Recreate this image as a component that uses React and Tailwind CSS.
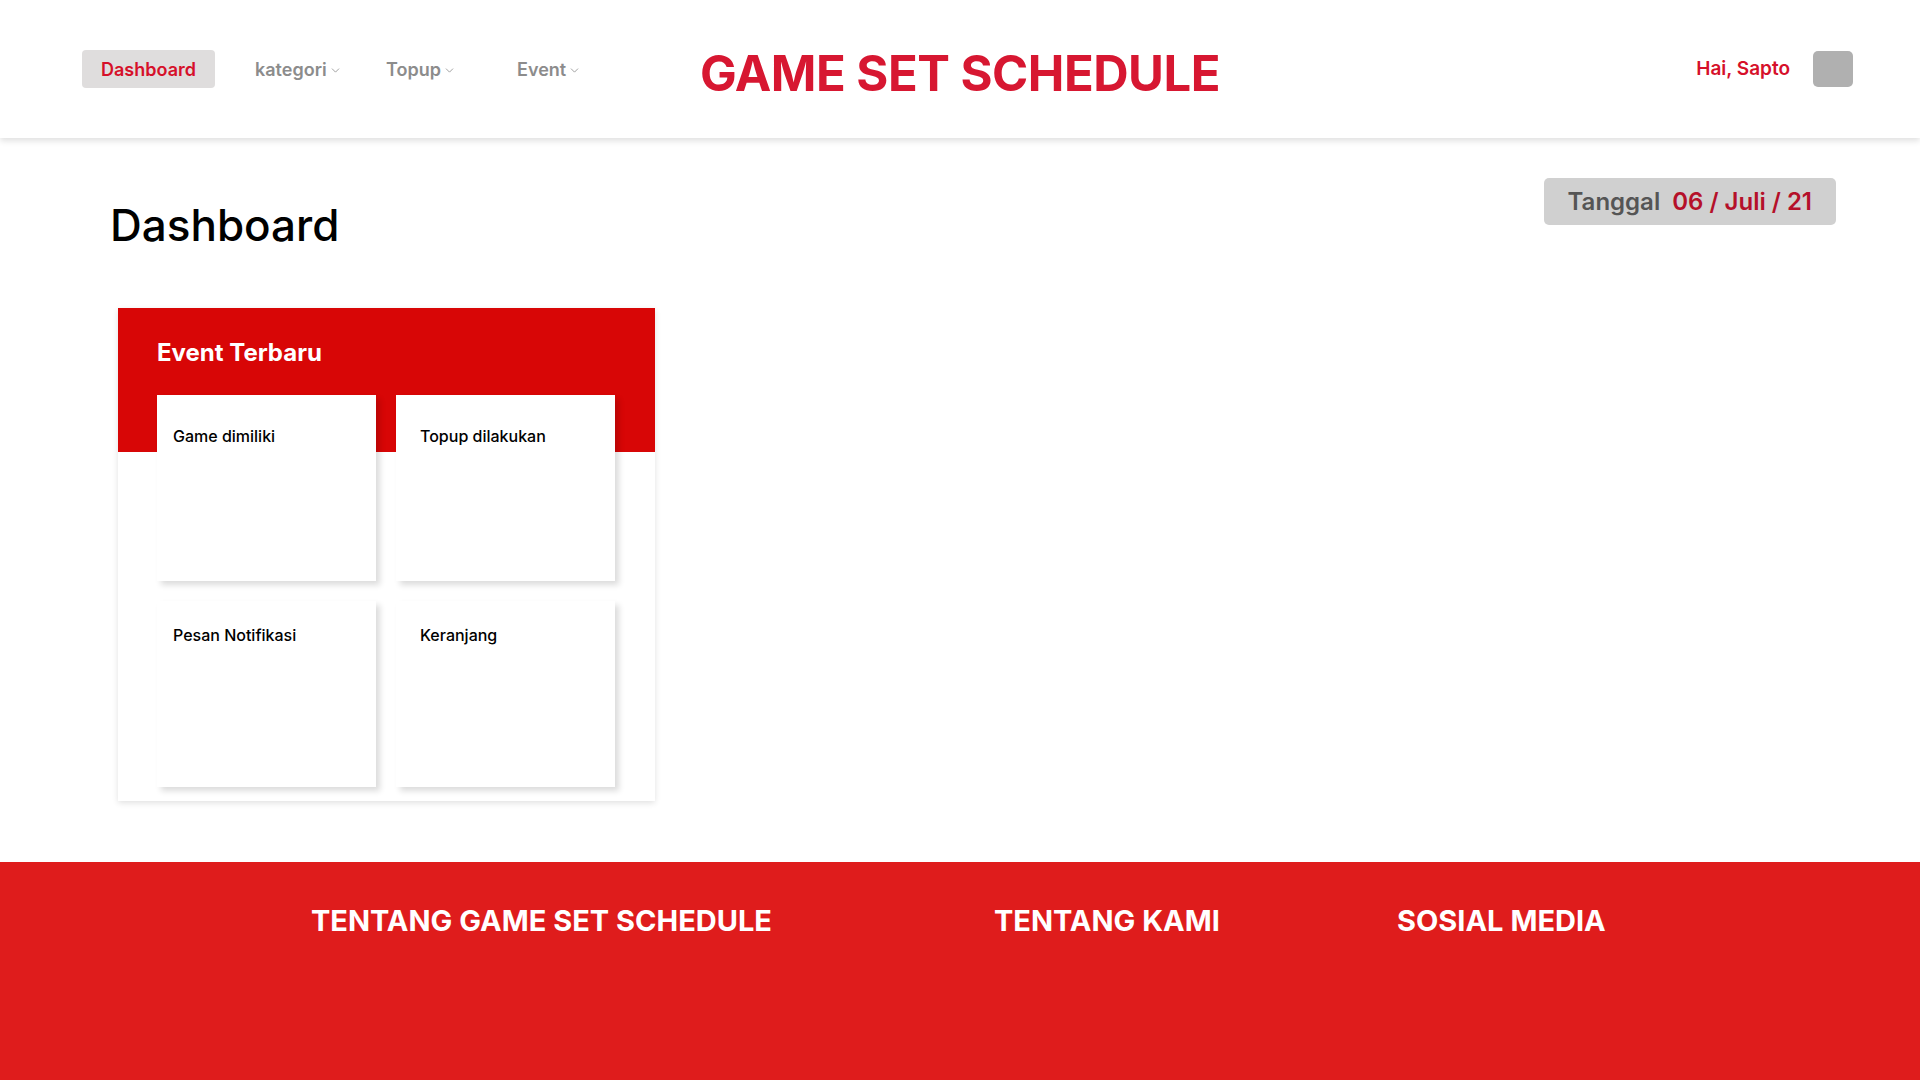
import { ChevronDown } from 'lucide-react'

const NAV = ['kategori', 'Topup', 'Event']

const STATS = [
  { label: 'Game dimiliki', pad: 'pt-[31px] pl-[16px]' },
  { label: 'Topup dilakukan', pad: 'pt-[31px] pl-[24px]' },
  { label: 'Pesan Notifikasi', pad: 'pt-[24px] pl-[16px]' },
  { label: 'Keranjang', pad: 'pt-[24px] pl-[24px]' },
]

function Header() {
  return (
    <header className="relative z-10 h-[138px] bg-white shadow-[0_3px_6px_rgba(0,0,0,0.12)] grid grid-cols-[1fr_auto_1fr] items-center px-[82px]">
      <nav className="flex items-center">
        <button className="h-[38px] w-[133px] rounded-[4px] bg-[#dfdddd] text-[#d6102a] text-[18px] font-semibold mr-[40px]">
          Dashboard
        </button>
        {NAV.map(item => (
          <span key={item} className="w-[131px] flex items-center gap-[2px] text-[18px] font-semibold text-[#8c8c8c]">
            {item}
            <ChevronDown size={13} strokeWidth={1.5} className="mt-[3px]" />
          </span>
        ))}
      </nav>
      <h1 className="mt-[9px] whitespace-nowrap text-center text-[49px] font-bold text-[#d71731] tracking-[-0.5px] leading-none">
        GAME SET SCHEDULE
      </h1>
      <div className="flex items-center justify-end gap-[23px] mr-[-15px]">
        <span className="text-[19px] font-semibold text-[#d6102a]">Hai, Sapto</span>
        <div className="w-[40px] h-[36px] rounded-[5px] bg-[#b0b0b0]" />
      </div>
    </header>
  )
}

function StatCard({ label, pad }) {
  return (
    <div className={`h-[186px] bg-white shadow-[4px_4px_6px_rgba(0,0,0,0.14)] ${pad}`}>
      <p className="text-[16px] font-medium text-black leading-[20px]">{label}</p>
    </div>
  )
}

function EventCard() {
  return (
    <section className="relative w-[537px] h-[493px] bg-white shadow-[0_2px_6px_rgba(0,0,0,0.12)]">
      <div className="absolute inset-x-0 top-0 h-[144px] bg-[#d80606]" />
      <div className="relative px-[39px]">
        <h3 className="pt-[27px] h-[87px] text-[24px] font-bold text-white">Event Terbaru</h3>
        <div className="grid grid-cols-2 gap-[20px] w-[458px]">
          {STATS.map(s => <StatCard key={s.label} {...s} />)}
        </div>
      </div>
    </section>
  )
}

export default function App() {
  return (
    <div className="min-h-screen flex flex-col bg-white" style={{ fontFamily: 'Inter, "Noto Sans", sans-serif' }}>
      <Header />
      <main className="h-[724px] px-[110px] pt-[40px]">
        <div className="flex justify-between items-start">
          <h2 className="mt-[25px] text-[44px] font-medium text-black leading-none">Dashboard</h2>
          <div className="h-[47px] px-[24px] rounded-[5px] bg-[#d0d0d0] flex items-center gap-[12px] text-[24px] font-semibold mr-[-26px]">
            <span className="text-[#555555]">Tanggal</span>
            <span className="text-[#b5102a]">06 / Juli / 21</span>
          </div>
        </div>
        <div className="mt-[61px] ml-[8px]">
          <EventCard />
        </div>
      </main>
      <footer className="h-[218px] bg-[#df1c1c] flex pt-[37px] pl-[311px]">
        <h4 className="w-[683px] text-[29px] font-bold text-white">TENTANG GAME SET SCHEDULE</h4>
        <h4 className="w-[403px] text-[29px] font-bold text-white">TENTANG KAMI</h4>
        <h4 className="text-[29px] font-bold text-white">SOSIAL MEDIA</h4>
      </footer>
    </div>
  )
}
